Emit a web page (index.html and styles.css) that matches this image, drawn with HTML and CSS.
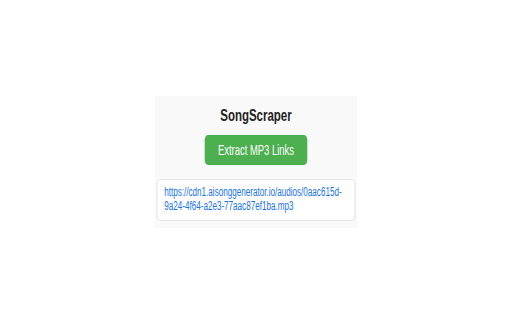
FILE: index.html
```html
<!DOCTYPE html>
<html>
<head>
<meta charset="utf-8">
<link rel="stylesheet" href="styles.css">
</head>
<body>
<div class="popup">
  <h1 class="title">SongScraper</h1>
  <div class="actions">
    <button class="extract-btn">Extract MP3 Links</button>
  </div>
  <div class="results">
    <a class="mp3-link" href="#">https://cdn1.aisonggenerator.io/audios/0aac615d-9a24-4f64-a2e3-77aac87ef1ba.mp3</a>
  </div>
</div>
</body>
</html>
```
FILE: styles.css
```css
html, body {
  margin: 0;
  padding: 0;
  background: #ffffff;
}
body {
  height: 320px;
  box-sizing: border-box;
  padding-top: 4px;
  display: flex;
  align-items: center;
  justify-content: center;
  font-family: "Liberation Sans", Arial, sans-serif;
}
.popup {
  width: 300px;
  box-sizing: border-box;
  padding: 10px 3px 7px;
  background: #f9f9f9;
  transform: scaleX(0.675);
}
.title {
  margin: 0 0 9px;
  font-size: 17px;
  line-height: 20px;
  font-weight: bold;
  color: #222;
  text-align: center;
}
.actions {
  display: flex;
  justify-content: center;
}
.extract-btn {
  font-family: "Liberation Sans", Arial, sans-serif;
  font-size: 14px;
  line-height: 16px;
  padding: 7px 20px;
  border: none;
  border-radius: 5px;
  background: #4caf50;
  color: #ffffff;
}
.results {
  margin-top: 14px;
  background: #ffffff;
  border: 1px solid #dddddd;
  border-radius: 5px;
  padding: 5px 10px 7px;
  font-size: 12px;
  line-height: normal;
}
.mp3-link {
  color: #1a73e8;
  text-decoration: none;
}
```
